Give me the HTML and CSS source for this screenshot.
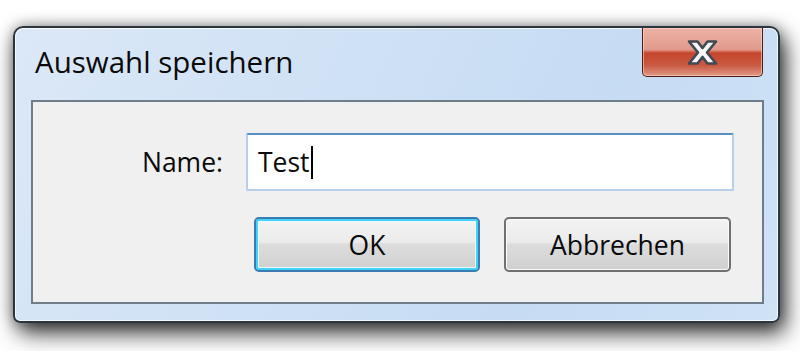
FILE: index.html
```html
<!DOCTYPE html>
<html lang="de">
<head>
  <meta charset="UTF-8">
  <title>Auswahl speichern</title>
  <link rel="stylesheet" href="styles.css">
</head>
<body>
  <div class="window">
    <div class="titlebar">
      <div class="title">Auswahl speichern</div>
      <button class="close" aria-label="Schließen">
        <svg width="31" height="27" viewBox="0 0 31 27">
          <polygon points="2,2.5 10.5,2.5 15.5,9 20.5,2.5 29,2.5 20,13.5 29,24.5 20.5,24.5 15.5,18 10.5,24.5 2,24.5 11,13.5"
                   fill="#f6f6f6" stroke="#3f4853" stroke-width="2.6" stroke-linejoin="round"/>
        </svg>
      </button>
    </div>
    <div class="panel">
      <div class="row">
        <label class="label" for="name">Name:</label>
        <div class="input" id="name">Test<span class="caret"></span></div>
      </div>
      <div class="row buttons">
        <button class="btn default">OK</button>
        <button class="btn">Abbrechen</button>
      </div>
    </div>
  </div>
</body>
</html>
```

FILE: styles.css
```css
/* Page */
html {
  background: #fff;
}

body {
  margin: 0;
  min-height: 351px;
  box-sizing: border-box;
  font-family: "Open Sans", "Noto Sans", sans-serif;
  font-size: 26.5px;
  color: #0a0a0a;
  padding: 26px 0 0 13px;
}

/* Window frame */
.window {
  box-sizing: border-box;
  width: 767px;
  height: 297px;
  border: 2px solid #2b3540;
  border-radius: 10px 10px 7px 7px;
  background: linear-gradient(115deg, #dbe8f7 0%, #cfe1f5 40%, #c6dcf3 70%, #cfe2f6 100%);
  box-shadow: inset 0 0 0 1px rgba(255, 255, 255, 0.75),
              5px 10px 22px rgba(0, 0, 0, 0.8),
              0 0 14px rgba(0, 0, 0, 0.35);
  display: flex;
  flex-direction: column;
  padding: 0 14px 0 16px;
}

.titlebar {
  height: 72px;
  display: flex;
  justify-content: space-between;
  align-items: flex-start;
}

.title {
  margin: 13px 0 0 4px;
  font-size: 29.5px;
}

/* Close button */
.close {
  width: 121px;
  height: 49px;
  margin: 0 1px 0 0;
  padding: 0;
  border: 1px solid #4d1e17;
  border-top: none;
  border-radius: 0 0 5px 5px;
  background: linear-gradient(#eeb2a6 0%, #e19a8c 45%, #c5452c 52%, #c95a42 78%, #e09a87 100%);
  box-shadow: inset 0 0 0 1px rgba(255, 220, 210, 0.55);
  display: flex;
  justify-content: center;
  align-items: center;
}

/* Content panel */
.panel {
  flex: 1;
  margin-bottom: 17px;
  border: 2px solid #6f7c89;
  background: #f0f0f0;
  padding-top: 31px;
}

.row {
  display: flex;
  align-items: center;
}

.label {
  width: 190px;
  text-align: right;
  margin-right: 23px;
}

.input {
  box-sizing: border-box;
  width: 488px;
  height: 58px;
  border: 2px solid #b7d0ea;
  border-top-color: #5b8ec2;
  border-radius: 2px;
  background: #fff;
  padding: 0 0 0 10px;
  display: flex;
  align-items: center;
}

.caret {
  display: inline-block;
  width: 2px;
  height: 33px;
  background: #000;
  margin-left: 1px;
}

/* Buttons */
.buttons {
  margin-top: 26px;
  padding-left: 221px;
  gap: 24px;
}

.btn {
  width: 227px;
  height: 55px;
  font-family: inherit;
  font-size: 26.5px;
  color: #0a0a0a;
  border: 2px solid #707070;
  border-radius: 5px;
  background: linear-gradient(#f3f3f3 0%, #ebebeb 45%, #dcdcdc 50%, #d0d0d0 100%);
  box-shadow: inset 0 0 0 1px #fbfbfb;
  padding: 0;
}

.btn.default {
  border-color: #3b7db3;
  box-shadow: inset 0 0 0 2px #3fd3f7, inset 0 0 0 3px #eefaff;
  width: 226px;
}
```
